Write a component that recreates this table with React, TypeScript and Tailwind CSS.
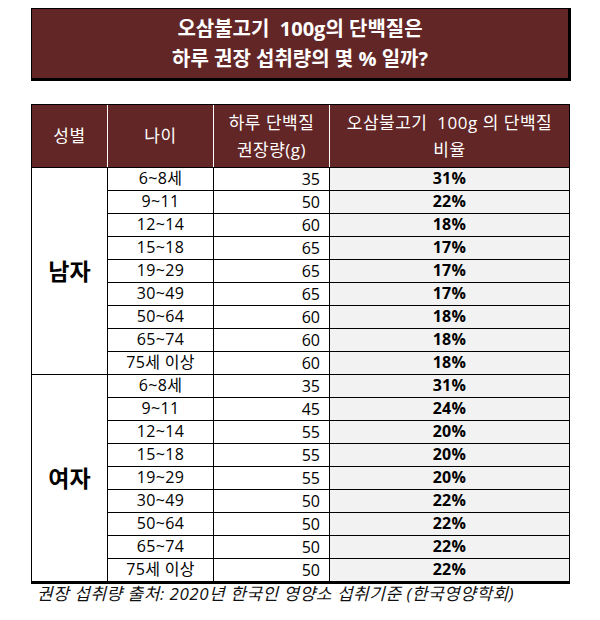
import React from "react";

const men = [
  ["6~8세", "35", "31%"],
  ["9~11", "50", "22%"],
  ["12~14", "60", "18%"],
  ["15~18", "65", "17%"],
  ["19~29", "65", "17%"],
  ["30~49", "65", "17%"],
  ["50~64", "60", "18%"],
  ["65~74", "60", "18%"],
  ["75세 이상", "60", "18%"],
];
const women = [
  ["6~8세", "35", "31%"],
  ["9~11", "45", "24%"],
  ["12~14", "55", "20%"],
  ["15~18", "55", "20%"],
  ["19~29", "55", "20%"],
  ["30~49", "50", "22%"],
  ["50~64", "50", "22%"],
  ["65~74", "50", "22%"],
  ["75세 이상", "50", "22%"],
];

function Group({ label, rows, last }: { label: string; rows: string[][]; last?: boolean }) {
  return (
    <div className={`flex ${last ? "" : "border-b border-black"}`}>
      <div className="w-[76px] flex items-center justify-center text-[23px] font-bold text-black border-r border-black">
        {label}
      </div>
      <div className="flex-1 flex flex-col">
        {rows.map((r, i) => {
          const isLast = i === rows.length - 1;
          return (
            <div
              key={i}
              className={`flex ${isLast ? "h-[22px]" : "h-[23px] border-b border-black"}`}
            >
              <div className="w-[106px] flex justify-center items-start leading-[20px] text-[16px] tracking-[0.02em] text-black border-r border-black">
                {r[0]}
              </div>
              <div className="w-[116px] flex justify-end items-start pt-[1px] pr-[9px] leading-[20px] text-[16px] text-black border-r border-black">
                {r[1]}
              </div>
              <div className="flex-1 flex justify-center items-start leading-[20px] text-[16px] tracking-[0.02em] font-bold text-black bg-[#f2f2f2]">
                {r[2]}
              </div>
            </div>
          );
        })}
      </div>
    </div>
  );
}

export default function App() {
  return (
    <div
      className="w-[600px] h-[620px] bg-white pt-[8px] pl-[31px]"
      style={{ fontFamily: '"Open Sans", "Noto Sans CJK KR", sans-serif' }}
    >
      <div className="w-[540px] h-[73px] bg-[#632626] border-t border-l border-black border-r-[3px] border-b-[3px] flex flex-col items-center justify-center text-white font-bold text-[20px] leading-[30px]">
        <div className="whitespace-pre">오삼불고기  100g의 단백질은</div>
        <div>하루 권장 섭취량의 몇 % 일까?</div>
      </div>

      <div className="mt-[23px] w-[539px] border-l border-r border-t border-black border-b-[3px]">
        <div className="flex h-[63px] bg-[#632626] text-white text-[17px] tracking-[0.03em] border-b border-black">
          <div className="w-[76px] flex items-center justify-center border-r border-white">성별</div>
          <div className="w-[106px] flex items-center justify-center border-r border-white">나이</div>
          <div className="w-[116px] flex flex-col items-center justify-center leading-[27px] border-r border-white">
            <div>하루 단백질</div>
            <div>권장량(g)</div>
          </div>
          <div className="flex-1 flex flex-col items-center justify-center leading-[27px]">
            <div className="whitespace-pre">오삼불고기  100g 의 단백질</div>
            <div>비율</div>
          </div>
        </div>
        <Group label="남자" rows={men} />
        <Group label="여자" rows={women} last />
      </div>

      <div className="pl-[6px] italic text-[17px] tracking-[0.03em] leading-[19px] text-[#111]">
        권장 섭취량 출처: 2020년 한국인 영양소 섭취기준 (한국영양학회)
      </div>
    </div>
  );
}
